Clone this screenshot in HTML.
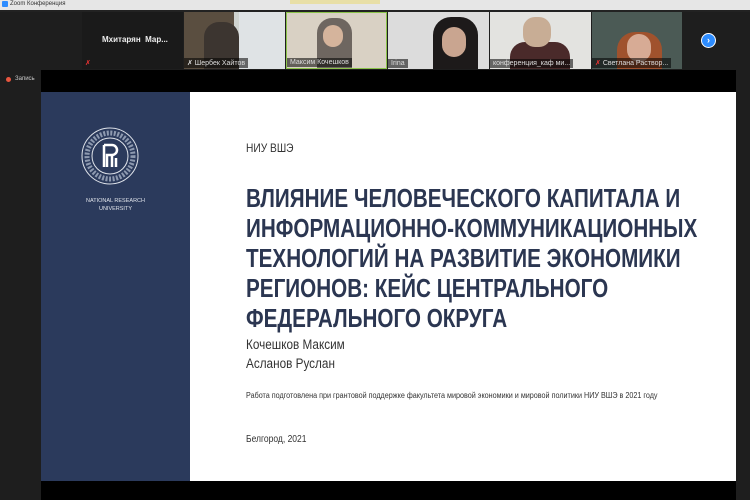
<!DOCTYPE html>
<html><head><meta charset="utf-8"><style>
*{margin:0;padding:0;box-sizing:border-box}
body{width:750px;height:500px;background:#1e1e1e;position:relative;overflow:hidden;font-family:"Liberation Sans",sans-serif}
.a{position:absolute}
.tile{position:absolute;top:12px;height:57px;overflow:hidden}
.lbl{position:absolute;bottom:1px;left:0;background:rgba(0,0,0,.55);color:#ddd;font-size:7px;padding:1px 3px;white-space:nowrap}
.t{position:absolute;left:246px;white-space:nowrap;transform-origin:left top;transform:scaleX(.795);font-weight:bold;font-size:26px;color:#2b3651;letter-spacing:0}
.n{position:absolute;left:246px;white-space:nowrap;transform-origin:left top;transform:scaleX(.85);color:#333;}
</style></head><body>
<div class="a" style="left:0;top:0;width:750px;height:10px;background:#e6e6e6"></div>
<div class="a" style="left:2px;top:1px;width:6px;height:6px;background:#2d8cff;border-radius:1px"></div>
<div class="a" style="left:10px;top:1px;font-size:6px;color:#333">Zoom Конференция</div>
<div class="a" style="left:290px;top:0;width:90px;height:4px;background:#e8dfa6"></div>
<div class="a" style="left:0;top:10px;width:750px;height:2px;background:#222"></div>
<div class="tile" style="left:82px;width:101px;background:#1a1a1a"><div class="a" style="left:20px;top:23px;color:#eee;font-size:8px;font-weight:bold">Мхитарян&nbsp; Мар...</div><div class="a" style="left:3px;bottom:2px;color:#e33;font-size:7px">✗</div></div>
<div class="tile" style="left:184px;width:101px;background:#cfd3cf"><div class="a" style="left:0;top:0;width:50px;height:57px;background:#5a4e40"></div><div class="a" style="left:20px;top:10px;width:35px;height:47px;background:#3c3530;border-radius:15px 15px 0 0"></div><div class="a" style="left:55px;top:0;width:46px;height:57px;background:#dfe3e5"></div><div class="lbl">✗ Шербек Хайтов</div></div>
<div class="tile" style="left:286px;width:101px;background:#d9d1c4;border:1px solid #8bc34a"><div class="a" style="left:30px;top:5px;width:35px;height:50px;background:#6e6660;border-radius:15px 15px 0 0"></div><div class="a" style="left:36px;top:12px;width:20px;height:22px;background:#d5b49c;border-radius:10px"></div><div class="lbl">Максим Кочешков</div></div>
<div class="tile" style="left:388px;width:101px;background:#dcdcdc"><div class="a" style="left:45px;top:5px;width:45px;height:55px;background:#1d1a1a;border-radius:18px 18px 0 0"></div><div class="a" style="left:54px;top:15px;width:24px;height:30px;background:#c9a590;border-radius:12px"></div><div class="lbl">Irina</div></div>
<div class="tile" style="left:490px;width:101px;background:#e3e3e0"><div class="a" style="left:20px;top:30px;width:60px;height:30px;background:#4a2a2a;border-radius:15px 15px 0 0"></div><div class="a" style="left:33px;top:5px;width:28px;height:30px;background:#c8ad95;border-radius:12px"></div><div class="lbl">конференция_каф ми...</div></div>
<div class="tile" style="left:592px;width:90px;background:#4b5a55"><div class="a" style="left:25px;top:20px;width:45px;height:40px;background:#a0522d;border-radius:18px 18px 0 0"></div><div class="a" style="left:35px;top:22px;width:24px;height:28px;background:#d7ab95;border-radius:12px"></div><div class="lbl" style="color:#ddd"><span style="color:#e33">✗</span> Светлана Раствор...</div></div>
<div class="a" style="left:701px;top:33px;width:15px;height:15px;border-radius:50%;background:#2d8cff;border:1px solid #fff;color:#fff;font-size:9px;line-height:12px;text-align:center;font-weight:bold">›</div>
<div class="a" style="left:6px;top:77px;width:5px;height:5px;border-radius:50%;background:#e8563f"></div>
<div class="a" style="left:15px;top:76px;font-size:6px;color:#ccc">Запись</div>
<div class="a" style="left:41px;top:70px;width:695px;height:430px;background:#000"></div>
<div class="a" style="left:41px;top:92px;width:695px;height:389px;background:#fff"></div>
<div class="a" style="left:41px;top:92px;width:149px;height:389px;background:#2b3a5c"></div>
<svg class="a" style="left:80px;top:126px" width="60" height="60" viewBox="0 0 60 60">
<circle cx="30" cy="30" r="28" fill="none" stroke="#dfe3ea" stroke-width="1"/>
<circle cx="30" cy="30" r="18" fill="none" stroke="#dfe3ea" stroke-width="1"/>
<circle cx="30" cy="30" r="23" fill="none" stroke="#8e9ab0" stroke-width="5" stroke-dasharray="2 1.5"/>
<path d="M24 19h8a5 5 0 0 1 0 10h-5v12M24 19v22M32 29v12M36 32v9" fill="none" stroke="#fff" stroke-width="2.5"/>
</svg>
<div class="a" style="left:41px;top:197px;width:149px;text-align:center;color:#dfe3ea;font-size:5.5px;line-height:8px">NATIONAL RESEARCH<br>UNIVERSITY</div>
<div class="n" style="top:141px;font-size:12px;color:#333">НИУ ВШЭ</div>
<div class="t" style="top:183px">ВЛИЯНИЕ ЧЕЛОВЕЧЕСКОГО КАПИТАЛА И</div>
<div class="t" style="top:213px">ИНФОРМАЦИОННО-КОММУНИКАЦИОННЫХ</div>
<div class="t" style="top:243px">ТЕХНОЛОГИЙ НА РАЗВИТИЕ ЭКОНОМИКИ</div>
<div class="t" style="top:273px">РЕГИОНОВ: КЕЙС ЦЕНТРАЛЬНОГО</div>
<div class="t" style="top:303px">ФЕДЕРАЛЬНОГО ОКРУГА</div>
<div class="n" style="top:337px;font-size:13.5px;transform:scaleX(.87)">Кочешков Максим</div>
<div class="n" style="top:356px;font-size:13.5px;transform:scaleX(.87)">Асланов Руслан</div>
<div class="n" style="top:391px;font-size:8px;transform:scaleX(.9)">Работа подготовлена при грантовой поддержке факультета мировой экономики и мировой политики НИУ ВШЭ в 2021 году</div>
<div class="n" style="top:434px;font-size:10px">Белгород, 2021</div>
</body></html>
